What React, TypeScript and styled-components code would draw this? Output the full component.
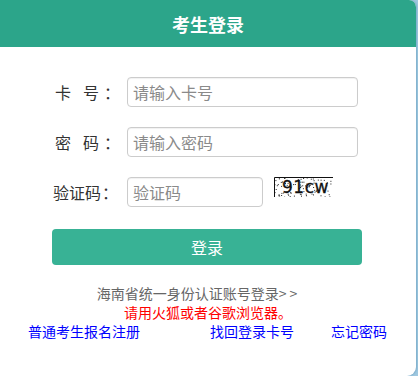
import React from 'react';
import styled, { createGlobalStyle } from 'styled-components';

const GlobalStyle = createGlobalStyle`
  html, body {
    margin: 0;
    padding: 0;
    background: #9fc8e0;
    font-family: "Noto Sans CJK SC", "Noto Sans", sans-serif;
  }
`;

const Panel = styled.div`
  width: 416px;
  height: 376px;
  background: #fff;
  border-radius: 0 7px 9px 0;
  overflow: hidden;
  box-shadow: 1px 0 2px rgba(60, 120, 160, 0.35);
`;

const Header = styled.div`
  height: 47px;
  background: #2ca58a;
  color: #fff;
  font-size: 18px;
  font-weight: bold;
  display: flex;
  align-items: center;
  justify-content: center;
`;

const Form = styled.div`
  padding: 30px 0 0 53px;
  display: flex;
  flex-direction: column;
  gap: 20px;
`;

const Row = styled.div`
  display: flex;
  align-items: center;
  height: 30px;
`;

const Label = styled.label<{ $spaced?: boolean }>`
  width: 74px;
  font-size: 16px;
  color: #333;
  white-space: pre;
  padding-left: ${({ $spaced }) => ($spaced ? '2px' : '0')};
  box-sizing: border-box;
`;

const Gap = styled.span`
  display: inline-block;
  width: 12px;
`;

const Colon = styled.span<{ $spaced?: boolean }>`
  margin-left: ${({ $spaced }) => ($spaced ? '5px' : '1px')};
`;

const Input = styled.input<{ $width: number }>`
  box-sizing: border-box;
  width: ${({ $width }) => $width}px;
  height: 30px;
  border: 1px solid #ccc;
  border-radius: 4px;
  padding: 0 5px;
  font-size: 16px;
  font-family: inherit;
  color: #333;
  outline: none;
  box-shadow: inset 0 1px 1px rgba(0, 0, 0, 0.06);

  &::placeholder {
    color: #8a8a8a;
  }
`;

const Captcha = styled.div`
  margin-left: 11px;
  align-self: flex-start;
  width: 59px;
  height: 20px;
  line-height: 0;
`;

const LoginButton = styled.button`
  margin: 2px 0 0 -1px;
  width: 310px;
  height: 36px;
  border: none;
  border-radius: 4px;
  background: #38b295;
  color: #fff;
  font-size: 16px;
  font-family: inherit;
  cursor: pointer;
`;

const Notes = styled.div`
  margin-top: 18px;
  display: flex;
  flex-direction: column;
  align-items: center;
  font-size: 14px;
`;

const IdLink = styled.a`
  color: #666;
  line-height: 20px;
  text-decoration: none;
  margin-right: 22px;
  white-space: pre;
`;

const Warning = styled.div`
  color: #ff0000;
  line-height: 19px;
`;

const Links = styled.div`
  display: grid;
  grid-template-columns: 182px 121px auto;
  padding-left: 28px;
  font-size: 14px;
  line-height: 19px;
`;

const BlueLink = styled.a`
  color: #0000ff;
  text-decoration: none;
`;

const CaptchaImage: React.FC = () => {
  const dots: React.ReactElement[] = [];
  let seed = 7;
  for (let i = 0; i < 90; i++) {
    seed = (seed * 9301 + 49297) % 233280;
    const x = (seed / 233280) * 59;
    seed = (seed * 9301 + 49297) % 233280;
    const y = (seed / 233280) * 20;
    dots.push(<rect key={i} x={x.toFixed(1)} y={y.toFixed(1)} width="1" height="1" fill="#222" />);
  }
  return (
    <svg width="59" height="20" viewBox="0 0 59 20">
      <rect x="0" y="0" width="59" height="20" fill="#fff" />
      {dots}
      <text
        x="8"
        y="16"
        fontFamily="'DejaVu Sans', sans-serif"
        fontSize="17"
        fill="#111"
        stroke="#111"
        strokeWidth="0.3"
        letterSpacing="0.5"
      >
        91cw
      </text>
      <path d="M0.5 20 V0.5 H59" stroke="#111" strokeWidth="1" fill="none" />
    </svg>
  );
};

const App: React.FC = () => {
  return (
    <>
      <GlobalStyle />
      <Panel>
        <Header>考生登录</Header>
        <Form>
          <Row>
            <Label $spaced>
              卡<Gap />号<Colon $spaced>：</Colon>
            </Label>
            <Input $width={231} placeholder="请输入卡号" />
          </Row>
          <Row>
            <Label $spaced>
              密<Gap />码<Colon $spaced>：</Colon>
            </Label>
            <Input $width={231} type="password" placeholder="请输入密码" />
          </Row>
          <Row>
            <Label>
              验证码<Colon>：</Colon>
            </Label>
            <Input $width={136} placeholder="验证码" />
            <Captcha>
              <CaptchaImage />
            </Captcha>
          </Row>
          <LoginButton>登录</LoginButton>
        </Form>
        <Notes>
          <IdLink href="#">海南省统一身份认证账号登录&gt; &gt;</IdLink>
          <Warning>请用火狐或者谷歌浏览器。</Warning>
        </Notes>
        <Links>
          <BlueLink href="#">普通考生报名注册</BlueLink>
          <BlueLink href="#">找回登录卡号</BlueLink>
          <BlueLink href="#">忘记密码</BlueLink>
        </Links>
      </Panel>
    </>
  );
};

export default App;
